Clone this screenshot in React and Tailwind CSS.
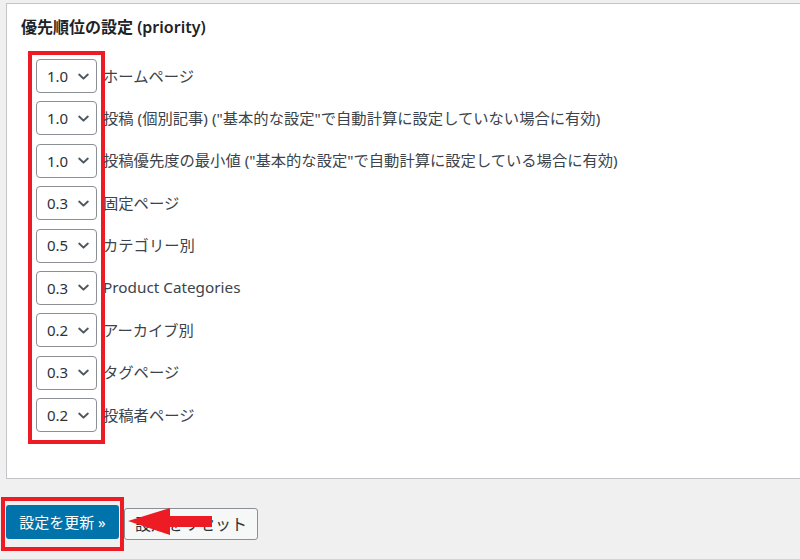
import React from 'react'

const rows = [
    { value: '1.0', label: 'ホームページ' },
    { value: '1.0', label: '投稿 (個別記事) ("基本的な設定"で自動計算に設定していない場合に有効)' },
    { value: '1.0', label: '投稿優先度の最小値 ("基本的な設定"で自動計算に設定している場合に有効)' },
    { value: '0.3', label: '固定ページ' },
    { value: '0.5', label: 'カテゴリー別' },
    { value: '0.3', label: 'Product Categories' },
    { value: '0.2', label: 'アーカイブ別' },
    { value: '0.3', label: 'タグページ' },
    { value: '0.2', label: '投稿者ページ' },
]

const Chevron = () => (
    <svg width="13" height="13" viewBox="0 0 12 12" className="text-[#50575e]">
        <path d="M2 4.2 L6 8 L10 4.2" fill="none" stroke="currentColor" strokeWidth="1.8" strokeLinecap="round" strokeLinejoin="round" />
    </svg>
)

const FakeSelect = ({ value }) => (
    <div className="flex h-[34px] w-[61px] items-center justify-between rounded-[4px] border border-[#8c8f94] bg-white pl-[10px] pr-[6px] text-[15px] text-[#2c3338]">
        <span>{value}</span>
        <Chevron />
    </div>
)

const App = () => {
    return (
        <div
            className="h-[559px] w-[800px] overflow-hidden bg-[#f0f0f1]"
            style={{ fontFamily: '"Noto Sans", "Noto Sans CJK JP", sans-serif' }}
        >
            {/* Settings panel */}
            <div className="ml-[6px] mt-[3px] h-[476px] w-[800px] border border-[#c3c4c7] bg-white pl-[21px] pt-[13px]">
                <h2 className="ml-[-7px] text-[16px] font-semibold leading-[20px] text-[#1d2327]">
                    優先順位の設定 (priority)
                </h2>

                <div className="mt-[14px] flex">
                    <div className="flex flex-col gap-[8.4px] border-4 border-[#ed1c24] px-[4px] pb-[8px] pt-[4px]">
                        {rows.map((r, i) => (
                            <FakeSelect key={i} value={r.value} />
                        ))}
                    </div>
                    <div className="ml-[-2px] flex flex-col gap-[8.4px] pt-[8px]">
                        {rows.map((r, i) => (
                            <div key={i} className="flex h-[34px] items-center whitespace-nowrap text-[15.3px] text-[#3c434a]">
                                {r.label}
                            </div>
                        ))}
                    </div>
                </div>
            </div>

            {/* Buttons */}
            <div className="relative mt-[18px] flex items-start">
                <div className="ml-[1px] border-4 border-[#ed1c24] px-[1px] pb-[8px] pt-[4px]">
                    <button className="flex h-[34px] w-[113px] items-center justify-center rounded-[3px] bg-[#0073aa] text-[15px] text-white">
                        設定を更新 »
                    </button>
                </div>
                <button className="mt-[11px] flex h-[32px] w-[134px] items-center rounded-[3px] border border-[#8c8f94] bg-[#f6f7f7] pl-[10px] text-[16px] text-[#2c3338]">
                    設定をリセット
                </button>

                <svg
                    className="absolute left-[126px] top-[10px]"
                    width="90"
                    height="32"
                    viewBox="0 0 90 32"
                >
                    <polygon points="2,14 44,1 44,9 86,9 86,20 44,20 44,28" fill="#ed1c24" />
                </svg>
            </div>
        </div>
    )
}

export default App
